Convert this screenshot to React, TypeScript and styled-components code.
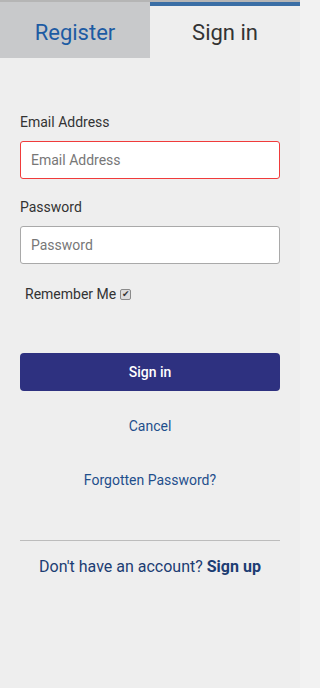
import React from 'react';
import styled, { createGlobalStyle } from 'styled-components';

const GlobalStyle = createGlobalStyle`
    html, body {
        margin: 0;
        padding: 0;
        background: #f2f2f2;
    }
    * {
        box-sizing: border-box;
    }
`;

const App = () => {
    return (
        <>
            <GlobalStyle />
            <Panel>
                <Tabs>
                    <Tab>Register</Tab>
                    <Tab $active>Sign in</Tab>
                </Tabs>

                <Form>
                    <Label>Email Address</Label>
                    <Input $error placeholder="Email Address" autoFocus />

                    <Label>Password</Label>
                    <Input type="password" placeholder="Password" />

                    <Remember>
                        Remember Me
                        <CheckBox>✔</CheckBox>
                    </Remember>

                    <SubmitButton>Sign in</SubmitButton>

                    <TextLink>Cancel</TextLink>
                    <TextLink $forgot>Forgotten Password?</TextLink>

                    <Divider />

                    <Footer>
                        Don't have an account? <strong>Sign up</strong>
                    </Footer>
                </Form>
            </Panel>
        </>
    );
};

export default App;

const Panel = styled.div`
    width: 300px;
    min-height: 688px;
    background-color: #eeeeee;
    border-top: 2px solid #b5b5b5;
    font-family: Roboto, 'Liberation Sans', sans-serif;
`;

const Tabs = styled.div`
    display: grid;
    grid-template-columns: 150px 150px;
`;

const Tab = styled.div<{ $active?: boolean }>`
    height: 56px;
    display: flex;
    align-items: center;
    justify-content: center;
    font-size: 22px;
    background-color: ${(props) => (props.$active ? '#eeeeee' : '#c8c9cb')};
    color: ${(props) => (props.$active ? '#333333' : '#1d5ba3')};
    border-top: ${(props) => (props.$active ? '4px solid #3a6ea5' : '0')};
    padding-top: ${(props) => (props.$active ? '1px' : '5px')};
`;

const Form = styled.div`
    padding: 54px 20px 0 20px;
    display: flex;
    flex-direction: column;
`;

const Label = styled.label`
    font-size: 14px;
    color: #333333;
    line-height: 20px;
    margin-bottom: 9px;
`;

const Input = styled.input<{ $error?: boolean }>`
    width: 260px;
    height: 38px;
    border: 1px solid ${(props) => (props.$error ? '#f03b3b' : '#a9a9a9')};
    border-radius: 3px;
    background: #ffffff;
    padding: 0 10px;
    font-family: Roboto, 'Liberation Sans', sans-serif;
    font-size: 14px;
    color: #333333;
    margin-bottom: 18px;
    outline: none;
    caret-color: #1d3a6e;

    &::placeholder {
        color: #777777;
    }
`;

const Remember = styled.div`
    display: flex;
    align-items: center;
    gap: 4px;
    padding-left: 5px;
    margin-top: 2px;
    font-size: 14px;
    color: #333333;
    line-height: 20px;
`;

const CheckBox = styled.span`
    width: 11px;
    height: 11px;
    border: 1px solid #8a8a8a;
    border-radius: 2px;
    background: #dcdcdc;
    color: #333333;
    font-size: 9px;
    line-height: 9px;
    display: flex;
    align-items: center;
    justify-content: center;
    font-family: 'DejaVu Sans', sans-serif;
`;

const SubmitButton = styled.button`
    margin-top: 49px;
    width: 260px;
    height: 38px;
    border: none;
    border-radius: 4px;
    background-color: #2e3180;
    color: #ffffff;
    font-family: Roboto, 'Liberation Sans', sans-serif;
    font-size: 14px;
    font-weight: 500;
    cursor: pointer;
`;

const TextLink = styled.a<{ $forgot?: boolean }>`
    display: block;
    text-align: center;
    font-size: 14px;
    line-height: 20px;
    color: #1f4f8c;
    margin-top: ${(props) => (props.$forgot ? '34px' : '25px')};
    cursor: pointer;
`;

const Divider = styled.hr`
    margin: 50px 0 0 0;
    border: none;
    border-top: 1px solid #bcbcbc;
`;

const Footer = styled.div`
    margin-top: 15px;
    text-align: center;
    font-size: 16px;
    line-height: 22px;
    color: #1c3d73;

    strong {
        color: #1c3d73;
        font-weight: 700;
    }
`;
